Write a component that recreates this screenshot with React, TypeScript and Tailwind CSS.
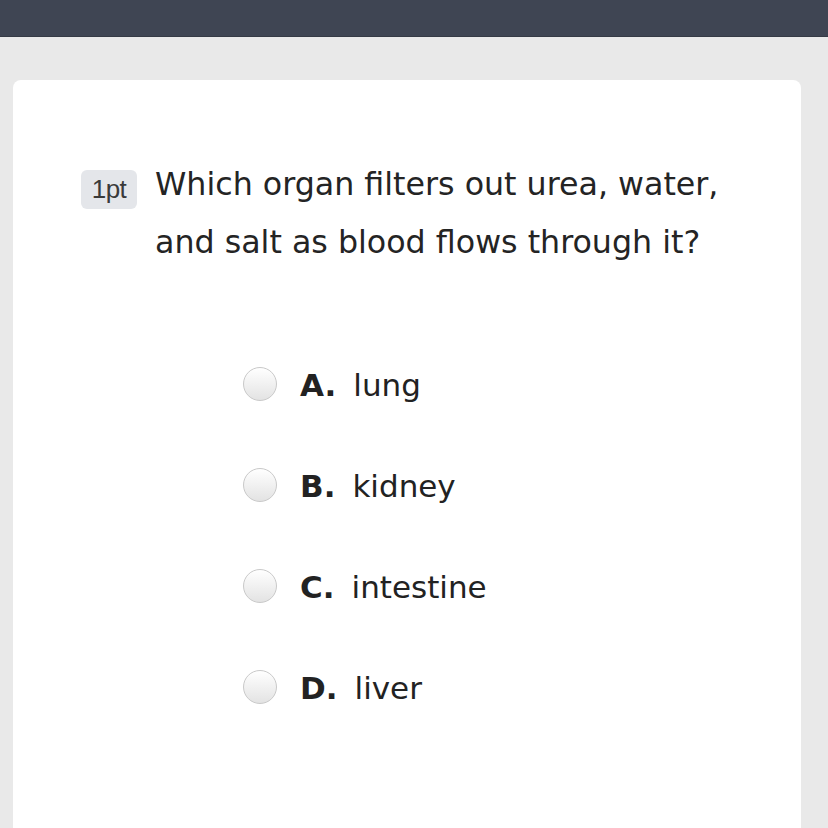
const options = [
  { key: 'A.', text: 'lung' },
  { key: 'B.', text: 'kidney' },
  { key: 'C.', text: 'intestine' },
  { key: 'D.', text: 'liver' },
]

export default function App() {
  return (
    <div className="min-h-[828px] bg-[#e9e9e9] font-['DejaVu_Sans',sans-serif]">
      <div className="h-[37px] border-b border-[#353a45] bg-[#3f4553]" />

      <div className="ml-[13px] mr-[27px] mt-[43px] h-[748px] rounded-t-lg bg-white pl-[68px] pt-[75px] pr-4">
        <div className="flex items-start">
          <span className="mt-[15px] flex h-[39px] w-[56px] shrink-0 items-center justify-center rounded-md bg-[#e4e6ea] font-['Liberation_Sans',sans-serif] text-[26px] tracking-[-0.5px] text-[#3a3a3a]">
            1pt
          </span>
          <p className="ml-[18px] whitespace-nowrap text-[31.7px] leading-[58px] text-[#242424]">
            Which organ filters out urea, water,
            <br />
            and salt as blood flows through it?
          </p>
        </div>

        <div className="mt-[62px] flex flex-col pl-[162px]">
          {options.map((o) => (
            <div key={o.key} className="flex h-[101px] items-center">
              <span className="h-[34px] w-[34px] shrink-0 rounded-full border border-[#c9c9c9] bg-gradient-to-b from-white to-[#e3e3e3]" />
              <span className="ml-[23px] pt-[3px] text-[31px] font-bold text-[#222]">{o.key}</span>
              <span className="ml-[17px] pt-[3px] text-[31px] text-[#222]">{o.text}</span>
            </div>
          ))}
        </div>
      </div>
    </div>
  )
}
